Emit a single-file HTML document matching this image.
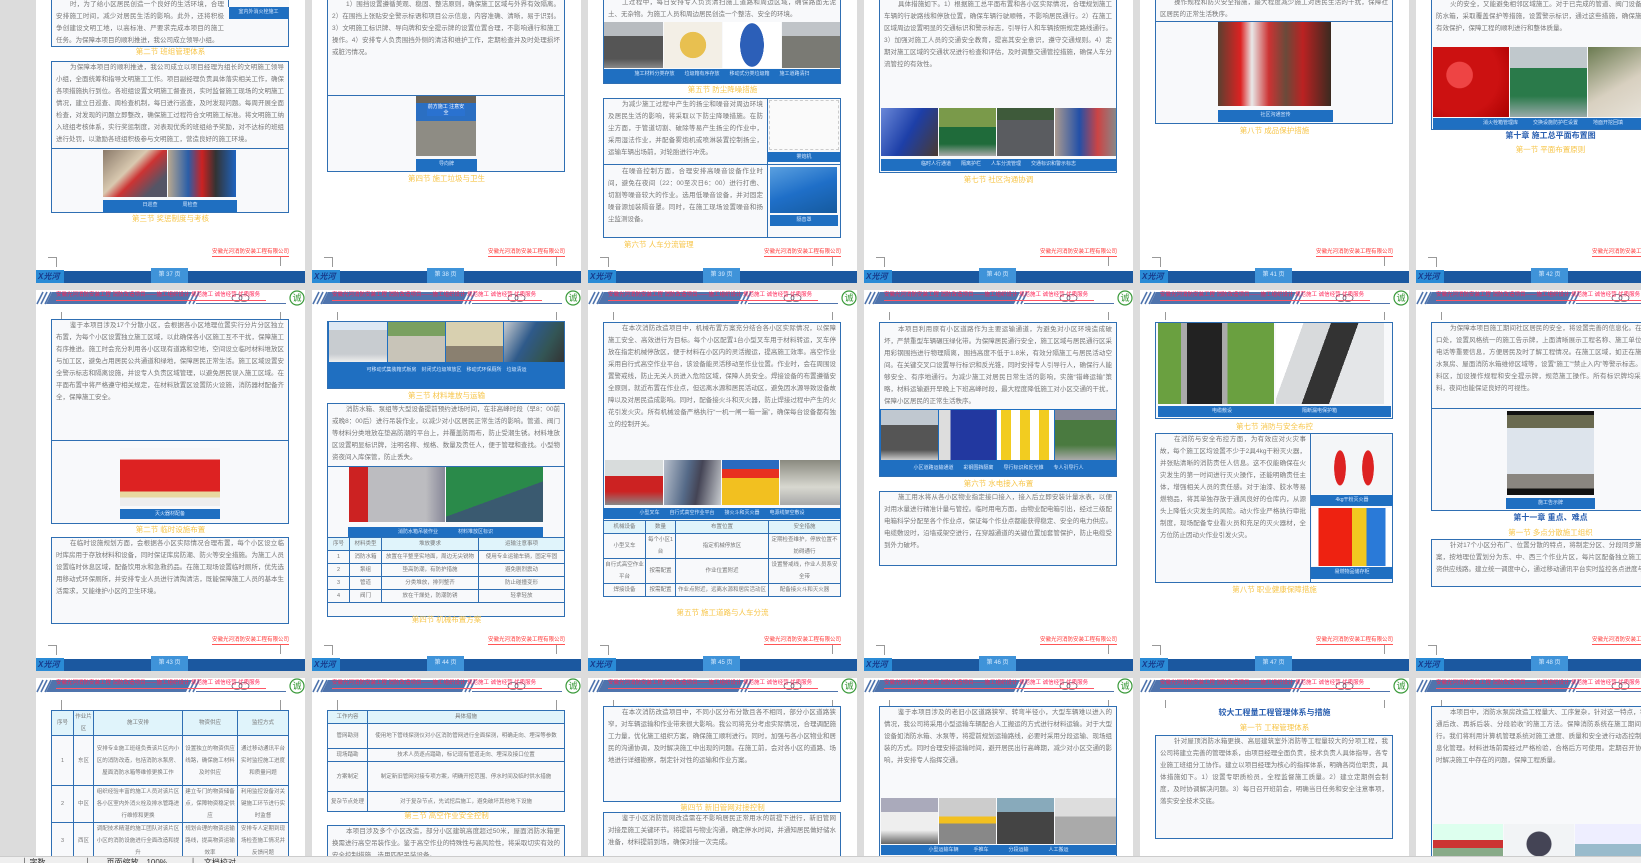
<!DOCTYPE html>
<html style="width:1641px;height:863px;overflow:hidden"><head><meta charset="utf-8">
<style>
*{margin:0;padding:0;box-sizing:border-box}
html,body{overflow:hidden}
body{width:1641px;height:863px;overflow:hidden;background:#dcdcdc;position:relative;font-family:"Liberation Sans","Noto Sans CJK SC",sans-serif}
.pg{position:absolute;width:269px;height:381px;background:#fff;overflow:hidden}
.hd{position:absolute;left:0;top:0}
.hdt{position:absolute;left:20px;top:1px;font-size:5.5px;color:#f25;white-space:nowrap;border-bottom:1px solid #f56;width:210px;overflow:hidden;line-height:9px}
.cm{position:absolute;border-color:#999;border-style:solid;border-width:0}
.ft{position:absolute;right:16px;top:346px;font-size:5.5px;color:#f33;border-bottom:1px solid #f55;white-space:nowrap;line-height:8px}
.bar{position:absolute;left:0;top:369px;width:269px;height:12px;background:#1b58a0}
.tab{position:absolute;left:115px;top:366px;width:37px;height:15px;background:#3f93d9;color:#d8ecff;font-size:6px;text-align:center;line-height:15px}
.logo{position:absolute;left:0;top:368px;width:28px;height:13px;background:#2a8bd6;color:#173a8a;font-size:8px;line-height:13px;font-style:italic;font-weight:bold;padding-left:2px;white-space:nowrap;overflow:hidden}
.bx{position:absolute;left:15px;width:238px;border:1px solid #2f6fb3;background:#f8f9fb;overflow:hidden}
.tx{position:absolute;font-size:6.5px;line-height:12px;color:#777;overflow:hidden;text-indent:14px;text-align:justify;padding:1px 4px}
.im{position:absolute}
.cap{position:absolute;background:#1f6fc1;color:#d6e8ff;font-size:5px;text-align:center;line-height:10px;white-space:nowrap;overflow:hidden}
.yl{position:absolute;left:0;width:269px;text-align:center;color:#f7c548;font-size:7.5px;line-height:10px;white-space:nowrap}
.h1{position:absolute;left:0;width:269px;text-align:center;color:#2a5fb0;font-size:8px;font-weight:bold;line-height:10px}
table{position:absolute;left:15px;width:238px;border-collapse:collapse;font-size:5.5px;color:#777;background:#f8f9fb}
td{border:1px solid #2f6fb3;text-align:center;line-height:12px;padding:0 1px}
tr.th td{background:#e0f4fb}
.sb{position:absolute;left:0;top:856px;width:1641px;height:7px;background:#efefef;border-top:1px solid #ccc;font-size:8px;line-height:12px;color:#333;white-space:nowrap;overflow:hidden}
</style></head><body>

<!-- ROW 1 (top -98) -->
<div class="pg" style="left:36px;top:-98px">
 <div class="bx" style="top:40px;height:105px"></div>
 <div class="tx" style="left:16px;top:96px;width:176px;height:48px">时，为了给小区居民创造一个良好的生活环境，合理安排施工时间，减少对居民生活的影响。此外，还将积极争创建设文明工地，以高标准、严要求完成本项目的施工任务。为保障本项目的顺利推进，我公司成立领导小组。</div>
 <div class="im" style="left:192px;top:40px;width:61px;height:65px;background:#f8f9fb;border-left:1px solid #2f6fb3"></div>
 <div class="cap" style="left:193px;top:105px;width:59px;height:12px">室内外消火栓施工</div>
 <div class="yl" style="top:145px">第二节 班组管理体系</div>
 <div class="bx" style="top:159px;height:152px"></div>
 <div class="tx" style="left:16px;top:159px;width:236px;height:87px">为保障本项目的顺利推进，我公司成立以项目经理为组长的文明施工领导小组，全面统筹和指导文明施工工作。项目副经理负责具体落实相关工作，确保各项措施执行到位。各班组设置文明施工督查员，实时监督施工现场的文明施工情况，建立日巡查、周检查机制，每日进行巡查，及时发现问题。每周开展全面检查，对发现的问题立即整改，确保施工过程符合文明施工标准。将文明施工纳入班组考核体系，实行奖惩制度，对表现优秀的班组给予奖励，对不达标的班组进行处罚，以激励各班组积极参与文明施工，营造良好的施工环境。</div>
 <div style="position:absolute;left:16px;top:246px;width:236px;border-top:1px solid #2f6fb3"></div>
 <div class="im" style="left:67px;top:248px;width:64px;height:47px;background:linear-gradient(135deg,#8a7a6a,#d9c9b0 40%,#c33 55%,#556 80%)"></div>
 <div class="im" style="left:132px;top:248px;width:68px;height:47px;background:linear-gradient(90deg,#b8a890,#2a5ea8 30%,#c22 50%,#333 70%,#1f64c0)"></div>
 <div class="cap" style="left:67px;top:298px;width:134px;height:12px">日巡查　　　　　周检查</div>
 <div class="yl" style="top:312px">第三节 奖惩制度与考核</div>
 <div class="ft">安徽光河消防安装工程有限公司</div>
 <div class="cm" style="left:12px;top:355px;width:9px;height:10px;border-top-width:1px;border-right-width:1px"></div>
 <div class="cm" style="left:244px;top:355px;height:9px;border-left-width:1px"></div>
 <div class="bar"></div><div class="tab">第 37 页</div><div class="logo">X光河</div>
</div>

<div class="pg" style="left:312px;top:-98px">
 <div class="bx" style="top:40px;height:230px"></div>
 <div class="tx" style="left:16px;top:96px;width:236px;height:96px">1）围挡设置遵循美观、稳固、整洁原则，确保施工区域与外界有效隔离。2）在围挡上张贴安全警示标语和项目公示信息，内容准确、清晰，易于识别。3）文明施工标识牌、导向牌和安全提示牌的设置位置合理，不影响通行和施工操作。4）安排专人负责围挡外侧的清洁和维护工作，定期检查并及时处理损坏或脏污情况。</div>
 <div style="position:absolute;left:16px;top:193px;width:236px;border-top:1px solid #2f6fb3"></div>
 <div class="im" style="left:104px;top:194px;width:60px;height:60px;background:linear-gradient(180deg,#6a6256 0 12%,#2b6fc2 12% 42%,#8e8c84 42% 100%)"></div>
 <div class="im" style="left:115px;top:202px;width:38px;height:12px;background:#2a72d0;color:#fff;font-size:5px;text-align:center;line-height:6px">前方施工 注意安全</div>
 <div class="cap" style="left:104px;top:257px;width:61px;height:12px">导向牌</div>
 <div class="yl" style="top:272px">第四节 施工垃圾与卫生</div>
 <div class="ft">安徽光河消防安装工程有限公司</div>
 <div class="cm" style="left:12px;top:355px;width:9px;height:10px;border-top-width:1px;border-right-width:1px"></div>
 <div class="cm" style="left:244px;top:355px;height:9px;border-left-width:1px"></div>
 <div class="bar"></div><div class="tab">第 38 页</div><div class="logo">X光河</div>
</div>

<div class="pg" style="left:588px;top:-98px">
 <div class="bx" style="top:40px;height:142px"></div>
 <div class="tx" style="left:16px;top:94px;width:236px;height:26px">工过程中，每日安排专人负责清扫施工道路和周边区域，确保路面无泥土、无杂物。为施工人员和周边居民创造一个整洁、安全的环境。</div>
 <div class="im" style="left:16px;top:120px;width:59px;height:46px;background:linear-gradient(180deg,#b8bcc0 0 30%,#555 30% 80%,#888)"></div>
 <div class="im" style="left:76px;top:120px;width:58px;height:46px;background:radial-gradient(circle at 50% 50%,#e8c050 0 35%,#f3efe6 36%)"></div>
 <div class="im" style="left:135px;top:120px;width:58px;height:46px;background:radial-gradient(ellipse 12px 22px at 50% 50%,#2c5fb8 0 98%,#fff 100%)"></div>
 <div class="im" style="left:194px;top:120px;width:58px;height:46px;background:linear-gradient(180deg,#c0c4c8 0 30%,#7a7a74 30%)"></div>
 <div class="cap" style="left:16px;top:167px;width:236px;height:14px">施工材料分类存放　　垃圾箱有序存放　　移动式分类垃圾箱　　施工道路清扫</div>
 <div class="yl" style="top:183px">第五节 防尘降噪措施</div>
 <div class="bx" style="top:196px;height:140px"></div>
 <div class="tx" style="left:16px;top:196px;width:163px;height:66px">为减少施工过程中产生的扬尘和噪音对周边环境及居民生活的影响，将采取以下防尘降噪措施。在防尘方面，于管道切割、破除等易产生扬尘的作业中，采用湿法作业，并配备雾炮机或喷淋装置控制扬尘，运输车辆出场前，对轮胎进行冲洗。</div>
 <div class="tx" style="left:16px;top:263px;width:163px;height:72px">在噪音控制方面，合理安排高噪音设备作业时间，避免在夜间（22：00至次日6：00）进行打凿、切割等噪音较大的作业。选用低噪音设备，并对固定噪音源加装隔音罩。同时，在施工现场设置噪音和扬尘监测设备。</div>
 <div style="position:absolute;left:16px;top:262px;width:236px;border-top:1px solid #2f6fb3"></div>
 <div style="position:absolute;left:179px;top:196px;height:140px;border-left:1px solid #2f6fb3"></div>
 <div class="im" style="left:181px;top:198px;width:70px;height:50px;background:#fafafa;border:1px dashed #ccc"></div>
 <div class="cap" style="left:180px;top:250px;width:72px;height:10px">雾炮机</div>
 <div class="im" style="left:182px;top:265px;width:67px;height:46px;background:linear-gradient(160deg,#5aa0e0,#1f6fc8 50%,#155a9e)"></div>
 <div class="cap" style="left:182px;top:313px;width:68px;height:11px">隔音罩</div>
 <div class="yl" style="top:338px;text-align:left;left:36px">第六节 人车分流管理</div>
 <div class="ft">安徽光河消防安装工程有限公司</div>
 <div class="cm" style="left:12px;top:355px;width:9px;height:10px;border-top-width:1px;border-right-width:1px"></div>
 <div class="cm" style="left:244px;top:355px;height:9px;border-left-width:1px"></div>
 <div class="bar"></div><div class="tab">第 39 页</div><div class="logo">X光河</div>
</div>

<div class="pg" style="left:864px;top:-98px">
 <div class="bx" style="top:40px;height:231px"></div>
 <div class="tx" style="left:16px;top:96px;width:236px;height:110px">具体措施如下。1）根据施工总平面布置和各小区实际情况，合理规划施工车辆的行驶路线和停放位置，确保车辆行驶顺畅，不影响居民通行。2）在施工区域周边设置明显的交通标识和警示标志，引导行人和车辆按照规定路线通行。3）加强对施工人员的交通安全教育，提高其安全意识，遵守交通规则。4）定期对施工区域的交通状况进行检查和评估，及时调整交通管控措施，确保人车分流管控的有效性。</div>
 <div class="im" style="left:17px;top:206px;width:57px;height:48px;background:linear-gradient(120deg,#6a88d8,#1d3fa8 50%,#4a3a30)"></div>
 <div class="im" style="left:75px;top:206px;width:57px;height:48px;background:linear-gradient(180deg,#7a9a4a 0 40%,#1f6b3a 40% 75%,#aaa)"></div>
 <div class="im" style="left:133px;top:206px;width:57px;height:48px;background:linear-gradient(180deg,#3e5a3a 0 25%,#5a5c60 25%)"></div>
 <div class="im" style="left:191px;top:206px;width:61px;height:48px;background:linear-gradient(90deg,#aa9a90,#2350a8 40%,#c44 70%,#888)"></div>
 <div class="cap" style="left:17px;top:257px;width:235px;height:12px">临时人行通道　　隔离护栏　　人车分流管理　　交通标识和警示标志</div>
 <div class="yl" style="top:273px">第七节 社区沟通协调</div>
 <div class="ft">安徽光河消防安装工程有限公司</div>
 <div class="cm" style="left:12px;top:355px;width:9px;height:10px;border-top-width:1px;border-right-width:1px"></div>
 <div class="cm" style="left:244px;top:355px;height:9px;border-left-width:1px"></div>
 <div class="bar"></div><div class="tab">第 40 页</div><div class="logo">X光河</div>
</div>

<div class="pg" style="left:1140px;top:-98px">
 <div class="bx" style="top:40px;height:182px"></div>
 <div class="tx" style="left:16px;top:94px;width:236px;height:26px">操作规程和防火安全措施，最大程度减少施工对居民生活的干扰，保障社区居民的正常生活秩序。</div>
 <div style="position:absolute;left:16px;top:119px;width:236px;border-top:1px solid #2f6fb3"></div>
 <div class="im" style="left:78px;top:120px;width:113px;height:84px;background:linear-gradient(90deg,#5a4030,#d22 20%,#e8e8e8 30%,#c33 45%,#6a4a3a 60%,#b22 75%,#3a2a20)"></div>
 <div class="cap" style="left:78px;top:208px;width:115px;height:12px">社区沟通宣传</div>
 <div class="yl" style="top:224px">第八节 成品保护措施</div>
 <div class="ft">安徽光河消防安装工程有限公司</div>
 <div class="cm" style="left:12px;top:355px;width:9px;height:10px;border-top-width:1px;border-right-width:1px"></div>
 <div class="cm" style="left:244px;top:355px;height:9px;border-left-width:1px"></div>
 <div class="bar"></div><div class="tab">第 41 页</div><div class="logo">X光河</div>
</div>

<div class="pg" style="left:1416px;top:-98px">
 <div class="bx" style="top:40px;height:188px;width:260px"></div>
 <div class="tx" style="left:16px;top:96px;width:240px;height:48px">火的安全，又能避免相邻区域施工。对于已完成的管道、阀门设备、屋顶消防水箱，采取覆盖保护等措施，设置警示标识，通过这些措施，确保施工过程中有效保护，保障工程的顺利进行和整体质量。</div>
 <div class="im" style="left:17px;top:145px;width:76px;height:70px;background:radial-gradient(circle at 35% 40%,#e44 0 20%,#c11 21% 60%,#a00)"></div>
 <div class="im" style="left:94px;top:145px;width:77px;height:70px;background:linear-gradient(180deg,#c0c8cc 0 30%,#2a7a4a 30% 70%,#9aa)"></div>
 <div class="im" style="left:172px;top:145px;width:80px;height:70px;background:linear-gradient(150deg,#6a7a50,#d8d0c0 50%,#ece8e0)"></div>
 <div class="cap" style="left:17px;top:216px;width:240px;height:11px">消火栓箱管理库　　　交换设施防护栏设置　　　地面开挖回填</div>
 <div class="h1" style="top:229px">第十章 施工总平面布置图</div>
 <div class="yl" style="top:243px">第一节 平面布置原则</div>
 <div class="ft">安徽光河消防安装工程有限公司</div>
 <div class="cm" style="left:12px;top:355px;width:9px;height:10px;border-top-width:1px;border-right-width:1px"></div>
 <div class="bar"></div><div class="tab">第 42 页</div><div class="logo">X光河</div>
</div>

<!-- ROW 2 (top 290) -->
<div class="pg" style="left:36px;top:290px">
 <svg class="hd" width="269" height="16"><g stroke="#4f74ad" stroke-width="1.6"><line x1="1" y1="14" x2="7" y2="2"/><line x1="5" y1="14" x2="11" y2="2"/><line x1="9" y1="14" x2="15" y2="2"/><line x1="153" y1="14" x2="159" y2="2"/><line x1="157" y1="14" x2="163" y2="2"/></g><polygon points="16,2 156,2 150,14 10,14" fill="#4f74ad"/><line x1="160" y1="13.5" x2="250" y2="13.5" stroke="#4f74ad"/><ellipse cx="201" cy="8" rx="5" ry="3.5" fill="none" stroke="#667" stroke-width=".8"/><ellipse cx="208" cy="8" rx="5" ry="3.5" fill="none" stroke="#667" stroke-width=".8"/><circle cx="261" cy="8" r="7" fill="#fff" stroke="#3a9a3a" stroke-width="1.2"/><text x="261" y="11" font-size="9" fill="#3a9a3a" text-anchor="middle" font-family="Noto Sans CJK SC">诚</text></svg>
 <div class="hdt">安徽光河消防安装工程 消防改造项目——施工组织设计 规范施工 诚信经营 优质服务</div>
 <div class="cm" style="left:25px;top:22px;height:8px;border-left-width:1px"></div><div class="cm" style="left:244px;top:22px;height:8px;border-left-width:1px"></div>
 <div class="bx" style="top:29px;height:205px"></div>
 <div class="tx" style="left:16px;top:29px;width:236px;height:120px">鉴于本项目涉及17个分散小区，会根据各小区地理位置实行分片分区独立布置，为每个小区设置独立施工区域，以此确保各小区施工互不干扰，保障施工有序推进。施工时会充分利用各小区现有道路和空地，空间设立临时材料堆放区与加工区，避免占用居民公共通道和绿地，保障居民正常生活。施工区域设置安全警示标志和隔离设施，并设专人负责区域管理，以避免居民误入施工区域。在平面布置中将严格遵守相关规定，在材料放置区设置防火设施，消防器材配备齐全，保障施工安全。</div>
 <div style="position:absolute;left:16px;top:150px;width:236px;border-top:1px solid #2f6fb3"></div>
 <div class="im" style="left:84px;top:158px;width:100px;height:58px;background:linear-gradient(180deg,#f6f6f8 0 20%,#d22 20% 75%,#e8d8a0 75% 85%,#eee 85%)"></div>
 <div class="cap" style="left:84px;top:219px;width:100px;height:10px">灭火器材配备</div>
 <div class="yl" style="top:235px">第二节 临时设施布置</div>
 <div class="bx" style="top:247px;height:87px"></div>
 <div class="tx" style="left:16px;top:247px;width:236px;height:86px">在临时设施规划方面，会根据各小区实际情况合理布置，每个小区设立临时库房用于存放材料和设备，同时保证库房防潮、防火等安全措施。为施工人员设置临时休息区域，配备饮用水和急救药品。在施工现场设置临时厕所，优先选用移动式环保厕所，并安排专业人员进行清掏清洁，既能保障施工人员的基本生活需求，又能维护小区的卫生环境。</div>
 <div class="ft">安徽光河消防安装工程有限公司</div>
 <div class="cm" style="left:12px;top:355px;width:9px;height:10px;border-top-width:1px;border-right-width:1px"></div>
 <div class="cm" style="left:244px;top:355px;height:9px;border-left-width:1px"></div>
 <div class="bar"></div><div class="tab">第 43 页</div><div class="logo">X光河</div>
</div>

<div class="pg" style="left:312px;top:290px">
 <svg class="hd" width="269" height="16"><g stroke="#4f74ad" stroke-width="1.6"><line x1="1" y1="14" x2="7" y2="2"/><line x1="5" y1="14" x2="11" y2="2"/><line x1="9" y1="14" x2="15" y2="2"/><line x1="153" y1="14" x2="159" y2="2"/><line x1="157" y1="14" x2="163" y2="2"/></g><polygon points="16,2 156,2 150,14 10,14" fill="#4f74ad"/><line x1="160" y1="13.5" x2="250" y2="13.5" stroke="#4f74ad"/><ellipse cx="201" cy="8" rx="5" ry="3.5" fill="none" stroke="#667" stroke-width=".8"/><ellipse cx="208" cy="8" rx="5" ry="3.5" fill="none" stroke="#667" stroke-width=".8"/><circle cx="261" cy="8" r="7" fill="#fff" stroke="#3a9a3a" stroke-width="1.2"/><text x="261" y="11" font-size="9" fill="#3a9a3a" text-anchor="middle" font-family="Noto Sans CJK SC">诚</text></svg>
 <div class="hdt">安徽光河消防安装工程 消防改造项目——施工组织设计 规范施工 诚信经营 优质服务</div>
 <div class="cm" style="left:25px;top:22px;height:8px;border-left-width:1px"></div><div class="cm" style="left:244px;top:22px;height:8px;border-left-width:1px"></div>
 <div class="bx" style="top:31px;height:68px;background:#1f6fc1"></div>
 <div class="im" style="left:17px;top:32px;width:58px;height:40px;background:linear-gradient(180deg,#dde8f4 0 20%,#c8ccd0 20% 80%,#eee)"></div>
 <div class="im" style="left:76px;top:32px;width:57px;height:40px;background:linear-gradient(180deg,#7aa060 0 35%,#c8c4b8 35%)"></div>
 <div class="im" style="left:134px;top:32px;width:57px;height:40px;background:linear-gradient(180deg,#d8d0b0 0 60%,#8a8070 60%)"></div>
 <div class="im" style="left:192px;top:32px;width:60px;height:40px;background:linear-gradient(120deg,#c8ccd0,#2f5a8a 40%,#355 70%,#333)"></div>
 <div class="cap" style="left:17px;top:75px;width:235px;height:22px;line-height:11px">可移动式集装箱式板房　封闭式垃圾堆放区　移动式环保厕所　垃圾清运</div>
 <div class="yl" style="top:101px">第三节 材料堆放与运输</div>
 <div class="bx" style="top:113px;height:214px"></div>
 <div class="tx" style="left:16px;top:113px;width:236px;height:62px">消防水箱、泵组等大型设备提前预约进场时间，在非高峰时段（早8：00前或晚8：00后）进行吊装作业，以减少对小区居民正常生活的影响。管道、阀门等材料分类堆放在垫高防潮的平台上，并覆盖防雨布，防止受潮生锈。材料堆放区设置明显标识牌，注明名称、规格、数量及责任人，便于管理和查找。小型物资夜间入库保管，防止丢失。</div>
 <div style="position:absolute;left:16px;top:176px;width:236px;border-top:1px solid #2f6fb3"></div>
 <div class="im" style="left:37px;top:177px;width:96px;height:55px;background:linear-gradient(90deg,#c22 0 20%,#bcbcc0 20% 80%,#889)"></div>
 <div class="im" style="left:134px;top:177px;width:97px;height:55px;background:linear-gradient(160deg,#2a8a4a 0 55%,#3a5a70 55%)"></div>
 <div class="cap" style="left:36px;top:237px;width:195px;height:10px">消防水箱吊装作业　　　　材料堆放区标识</div>
 <table style="top:247px"><tr class="th"><td style="width:22px">序号</td><td style="width:32px">材料类型</td><td>堆放要求</td><td style="width:86px">运输注意事项</td></tr>
 <tr><td>1</td><td>消防水箱</td><td>放置在平整坚实地面，周边无尖锐物</td><td>使用专业运输车辆，固定牢固</td></tr>
 <tr><td>2</td><td>泵组</td><td>垫高防潮，有防护措施</td><td>避免剧烈震动</td></tr>
 <tr><td>3</td><td>管道</td><td>分类堆放，排列整齐</td><td>防止碰撞变形</td></tr>
 <tr><td>4</td><td>阀门</td><td>放在干燥处，防潮防锈</td><td>轻拿轻放</td></tr></table>
 <div class="yl" style="top:325px">第四节 机械布置方案</div>
 <div class="ft">安徽光河消防安装工程有限公司</div>
 <div class="cm" style="left:12px;top:355px;width:9px;height:10px;border-top-width:1px;border-right-width:1px"></div>
 <div class="cm" style="left:244px;top:355px;height:9px;border-left-width:1px"></div>
 <div class="bar"></div><div class="tab">第 44 页</div><div class="logo">X光河</div>
</div>

<div class="pg" style="left:588px;top:290px">
 <svg class="hd" width="269" height="16"><g stroke="#4f74ad" stroke-width="1.6"><line x1="1" y1="14" x2="7" y2="2"/><line x1="5" y1="14" x2="11" y2="2"/><line x1="9" y1="14" x2="15" y2="2"/><line x1="153" y1="14" x2="159" y2="2"/><line x1="157" y1="14" x2="163" y2="2"/></g><polygon points="16,2 156,2 150,14 10,14" fill="#4f74ad"/><line x1="160" y1="13.5" x2="250" y2="13.5" stroke="#4f74ad"/><ellipse cx="201" cy="8" rx="5" ry="3.5" fill="none" stroke="#667" stroke-width=".8"/><ellipse cx="208" cy="8" rx="5" ry="3.5" fill="none" stroke="#667" stroke-width=".8"/><circle cx="261" cy="8" r="7" fill="#fff" stroke="#3a9a3a" stroke-width="1.2"/><text x="261" y="11" font-size="9" fill="#3a9a3a" text-anchor="middle" font-family="Noto Sans CJK SC">诚</text></svg>
 <div class="hdt">安徽光河消防安装工程 消防改造项目——施工组织设计 规范施工 诚信经营 优质服务</div>
 <div class="cm" style="left:25px;top:22px;height:8px;border-left-width:1px"></div><div class="cm" style="left:244px;top:22px;height:8px;border-left-width:1px"></div>
 <div class="bx" style="top:32px;height:200px"></div>
 <div class="tx" style="left:16px;top:32px;width:236px;height:136px">在本次消防改造项目中，机械布置方案充分结合各小区实际情况，以保障施工安全、高效进行为目标。每个小区配置1台小型叉车用于材料转运，叉车停放在指定机械停放区，便于材料在小区内的灵活搬运，提高施工效率。高空作业采用自行式高空作业平台，该设备能灵活移动至作业位置。作业时，会在周围设置警戒线，防止无关人员进入危险区域，保障人员安全。焊接设备的布置遵循安全原则，就近布置在作业点，但远离水源和居民活动区，避免因水源导致设备故障以及对居民造成影响。同时，配备接火斗和灭火器，防止焊接过程中产生的火花引发火灾。所有机械设备严格执行“一机一闸一箱一漏”，确保每台设备都有独立的控制开关。</div>
 <div class="im" style="left:17px;top:170px;width:58px;height:45px;background:linear-gradient(180deg,#d8dcdc 0 35%,#c22 35% 70%,#888)"></div>
 <div class="im" style="left:76px;top:170px;width:57px;height:45px;background:linear-gradient(100deg,#b8c0cc,#556a88 40%,#445 60%,#c8ccd0)"></div>
 <div class="im" style="left:134px;top:170px;width:57px;height:45px;background:linear-gradient(180deg,#2a6ac0 0 20%,#e83020 20% 40%,#f2c020 40%)"></div>
 <div class="im" style="left:192px;top:170px;width:60px;height:45px;background:linear-gradient(180deg,#8a8a80,#d8d8d0 60%,#aaa)"></div>
 <div class="cap" style="left:15px;top:218px;width:238px;height:11px">小型叉车　　自行式高空作业平台　　接火斗和灭火器　　电源线架空敷设</div>
 <table style="top:230px"><tr class="th"><td style="width:42px">机械设备</td><td style="width:30px">数量</td><td>布置位置</td><td style="width:72px">安全措施</td></tr>
 <tr><td>小型叉车</td><td>每个小区1台</td><td>指定机械停放区</td><td>定期检查维护，停放位置不妨碍通行</td></tr>
 <tr><td>自行式高空作业平台</td><td>按需配置</td><td>作业位置附近</td><td>设置警戒线，作业人员系安全带</td></tr>
 <tr><td>焊接设备</td><td>按需配置</td><td>作业点附近，远离水源和居民活动区</td><td>配备接火斗和灭火器</td></tr></table>
 <div class="yl" style="top:318px">第五节 施工道路与人车分流</div>
 <div class="ft">安徽光河消防安装工程有限公司</div>
 <div class="cm" style="left:12px;top:355px;width:9px;height:10px;border-top-width:1px;border-right-width:1px"></div>
 <div class="cm" style="left:244px;top:355px;height:9px;border-left-width:1px"></div>
 <div class="bar"></div><div class="tab">第 45 页</div><div class="logo">X光河</div>
</div>

<div class="pg" style="left:864px;top:290px">
 <svg class="hd" width="269" height="16"><g stroke="#4f74ad" stroke-width="1.6"><line x1="1" y1="14" x2="7" y2="2"/><line x1="5" y1="14" x2="11" y2="2"/><line x1="9" y1="14" x2="15" y2="2"/><line x1="153" y1="14" x2="159" y2="2"/><line x1="157" y1="14" x2="163" y2="2"/></g><polygon points="16,2 156,2 150,14 10,14" fill="#4f74ad"/><line x1="160" y1="13.5" x2="250" y2="13.5" stroke="#4f74ad"/><ellipse cx="201" cy="8" rx="5" ry="3.5" fill="none" stroke="#667" stroke-width=".8"/><ellipse cx="208" cy="8" rx="5" ry="3.5" fill="none" stroke="#667" stroke-width=".8"/><circle cx="261" cy="8" r="7" fill="#fff" stroke="#3a9a3a" stroke-width="1.2"/><text x="261" y="11" font-size="9" fill="#3a9a3a" text-anchor="middle" font-family="Noto Sans CJK SC">诚</text></svg>
 <div class="hdt">安徽光河消防安装工程 消防改造项目——施工组织设计 规范施工 诚信经营 优质服务</div>
 <div class="cm" style="left:25px;top:22px;height:8px;border-left-width:1px"></div><div class="cm" style="left:244px;top:22px;height:8px;border-left-width:1px"></div>
 <div class="bx" style="top:32px;height:155px;background:#1f6fc1"></div>
 <div class="tx" style="left:16px;top:33px;width:236px;height:86px;background:#f8f9fb">本项目利用原有小区道路作为主要运输通道，为避免对小区环境造成破坏，严禁重型车辆碾压绿化带。为保障居民通行安全，施工区域与居民通行区采用彩钢围挡进行物理隔离，围挡高度不低于1.8米，有效分隔施工与居民活动空间。在关键交叉口设置导行标识和反光锥，同时安排专人引导行人，确保行人能够安全、有序地通行。为减少施工对居民日常生活的影响，实施“错峰运输”策略，材料运输避开早晚上下班高峰时段，最大程度降低施工对小区交通的干扰，保障小区居民的正常生活秩序。</div>
 <div class="im" style="left:17px;top:120px;width:57px;height:50px;background:linear-gradient(180deg,#c0c8d0 0 30%,#555 30% 80%,#ccc)"></div>
 <div class="im" style="left:75px;top:120px;width:57px;height:50px;background:linear-gradient(90deg,#ddd 0 20%,#2238a0 20%)"></div>
 <div class="im" style="left:133px;top:120px;width:57px;height:50px;background:repeating-linear-gradient(90deg,#fff 0 4px,#f2cc20 4px 14px,#fff 14px 19px)"></div>
 <div class="im" style="left:191px;top:120px;width:61px;height:50px;background:linear-gradient(180deg,#889 0 20%,#4a7a40 20% 70%,#aaa)"></div>
 <div class="cap" style="left:17px;top:173px;width:235px;height:11px">小区道路运输通道　　彩钢围挡隔离　　导行标识和反光锥　　专人引导行人</div>
 <div class="yl" style="top:189px">第六节 水电接入布置</div>
 <div class="bx" style="top:201px;height:75px"></div>
 <div class="tx" style="left:16px;top:201px;width:236px;height:74px">施工用水将从各小区物业指定接口接入，接入后立即安装计量水表，以便对用水量进行精准计量与管控。临时用电方面，由物业配电箱引出，经过三级配电箱科学分配至各个作业点，保证每个作业点都能获得稳定、安全的电力供应。电缆敷设时，沿墙或架空进行，在穿越通道的关键位置加套管保护，防止电缆受到外力破坏。</div>
 <div class="ft">安徽光河消防安装工程有限公司</div>
 <div class="cm" style="left:12px;top:355px;width:9px;height:10px;border-top-width:1px;border-right-width:1px"></div>
 <div class="cm" style="left:244px;top:355px;height:9px;border-left-width:1px"></div>
 <div class="bar"></div><div class="tab">第 46 页</div><div class="logo">X光河</div>
</div>

<div class="pg" style="left:1140px;top:290px">
 <svg class="hd" width="269" height="16"><g stroke="#4f74ad" stroke-width="1.6"><line x1="1" y1="14" x2="7" y2="2"/><line x1="5" y1="14" x2="11" y2="2"/><line x1="9" y1="14" x2="15" y2="2"/><line x1="153" y1="14" x2="159" y2="2"/><line x1="157" y1="14" x2="163" y2="2"/></g><polygon points="16,2 156,2 150,14 10,14" fill="#4f74ad"/><line x1="160" y1="13.5" x2="250" y2="13.5" stroke="#4f74ad"/><ellipse cx="201" cy="8" rx="5" ry="3.5" fill="none" stroke="#667" stroke-width=".8"/><ellipse cx="208" cy="8" rx="5" ry="3.5" fill="none" stroke="#667" stroke-width=".8"/><circle cx="261" cy="8" r="7" fill="#fff" stroke="#3a9a3a" stroke-width="1.2"/><text x="261" y="11" font-size="9" fill="#3a9a3a" text-anchor="middle" font-family="Noto Sans CJK SC">诚</text></svg>
 <div class="hdt">安徽光河消防安装工程 消防改造项目——施工组织设计 规范施工 诚信经营 优质服务</div>
 <div class="cm" style="left:25px;top:22px;height:8px;border-left-width:1px"></div><div class="cm" style="left:244px;top:22px;height:8px;border-left-width:1px"></div>
 <div class="bx" style="top:32px;height:97px"></div>
 <div class="im" style="left:18px;top:33px;width:116px;height:81px;background:linear-gradient(90deg,#6aa040 0 20%,#aaa 20% 25%,#222 25% 55%,#aaa 55% 60%,#6aa040 60%)"></div>
 <div class="im" style="left:136px;top:33px;width:108px;height:81px;background:linear-gradient(110deg,#fff 0 20%,#d8dadc 20% 40%,#333 40% 60%,#e4e6e8 60%)"></div>
 <div class="cap" style="left:18px;top:116px;width:233px;height:11px">电缆敷设　　　　　　　　　　　　　　隔断漏电保护箱</div>
 <div class="yl" style="top:132px">第七节 消防与安全布控</div>
 <div class="bx" style="top:143px;height:150px"></div>
 <div class="tx" style="left:16px;top:143px;width:154px;height:148px">在消防与安全布控方面，为有效应对火灾事故，每个施工区均设置不少于2具4kg干粉灭火器，并张贴清晰的消防责任人信息。这不仅能确保在火灾发生的第一时间进行灭火操作，还能明确责任主体，增强相关人员的责任感。对于油漆、胶水等易燃物品，将其单独存放于通风良好的仓库内，从源头上降低火灾发生的风险。动火作业严格执行审批制度，现场配备专业看火员和充足的灭火器材，全方位防止因动火作业引发火灾。</div>
 <div style="position:absolute;left:170px;top:143px;height:150px;border-left:1px solid #2f6fb3"></div>
 <div class="im" style="left:172px;top:146px;width:80px;height:58px;background:radial-gradient(ellipse 6px 18px at 35% 55%,#d22 0 95%,transparent 100%),radial-gradient(ellipse 6px 18px at 70% 55%,#d22 0 95%,transparent 100%),#f4f6f8"></div>
 <div class="cap" style="left:171px;top:205px;width:82px;height:11px">4kg干粉灭火器</div>
 <div class="im" style="left:172px;top:218px;width:80px;height:58px;background:linear-gradient(90deg,#fff 0 8%,#e21 8% 50%,#f2c820 50% 68%,#2a7ad8 68% 92%,#fff 92%)"></div>
 <div class="cap" style="left:171px;top:277px;width:82px;height:12px">易燃物品储存柜</div>
 <div class="yl" style="top:295px">第八节 职业健康保障措施</div>
 <div class="ft">安徽光河消防安装工程有限公司</div>
 <div class="cm" style="left:12px;top:355px;width:9px;height:10px;border-top-width:1px;border-right-width:1px"></div>
 <div class="cm" style="left:244px;top:355px;height:9px;border-left-width:1px"></div>
 <div class="bar"></div><div class="tab">第 47 页</div><div class="logo">X光河</div>
</div>

<div class="pg" style="left:1416px;top:290px">
 <svg class="hd" width="269" height="16"><g stroke="#4f74ad" stroke-width="1.6"><line x1="1" y1="14" x2="7" y2="2"/><line x1="5" y1="14" x2="11" y2="2"/><line x1="9" y1="14" x2="15" y2="2"/><line x1="153" y1="14" x2="159" y2="2"/><line x1="157" y1="14" x2="163" y2="2"/></g><polygon points="16,2 156,2 150,14 10,14" fill="#4f74ad"/><line x1="160" y1="13.5" x2="250" y2="13.5" stroke="#4f74ad"/><ellipse cx="201" cy="8" rx="5" ry="3.5" fill="none" stroke="#667" stroke-width=".8"/><ellipse cx="208" cy="8" rx="5" ry="3.5" fill="none" stroke="#667" stroke-width=".8"/></svg>
 <div class="hdt">安徽光河消防安装工程 消防改造项目——施工组织设计 规范施工 诚信经营 优质服务</div>
 <div class="cm" style="left:25px;top:22px;height:8px;border-left-width:1px"></div>
 <div class="bx" style="top:32px;height:189px;width:260px"></div>
 <div class="tx" style="left:16px;top:32px;width:240px;height:86px">为保障本项目施工期间社区居民的安全，将设置完善的信息化。在各小区入口处，设置风格统一的施工告示牌，上面清晰展示工程名称、施工单位以及监督电话等重要信息，方便居民及时了解工程情况。在施工区域，如正在施工的消防水泵房、屋面消防水箱维修区域等，设置“施工”“禁止入内”等警示标志。在主要材料区，加设操作规程和安全提示牌，规范施工操作。所有标识牌均采用反光材料，夜间也能保证良好的可视性。</div>
 <div style="position:absolute;left:16px;top:118px;width:244px;border-top:1px solid #2f6fb3"></div>
 <div class="im" style="left:91px;top:121px;width:87px;height:84px;background:linear-gradient(180deg,#111 0 5%,#6a6a50 5% 20%,#dde4ec 20% 75%,#8a8680 75% 92%,#111 92%)"></div>
 <div class="cap" style="left:90px;top:208px;width:89px;height:11px">施工告示牌</div>
 <div class="h1" style="top:223px">第十一章 重点、难点</div>
 <div class="yl" style="top:238px">第一节 多点分散施工组织</div>
 <div class="bx" style="top:249px;height:48px;width:260px"></div>
 <div class="tx" style="left:16px;top:249px;width:240px;height:48px">针对17个小区分布广、位置分散的特点，将制定分区、分段同步施工技术方案，按地理位置划分为东、中、西三个作业片区，每片区配备独立施工班组和物资供应线路。建立统一调度中心，通过移动通讯平台实时监控各点进度与问题。</div>
 <div class="ft">安徽光河消防安装工程有限公司</div>
 <div class="cm" style="left:12px;top:355px;width:9px;height:10px;border-top-width:1px;border-right-width:1px"></div>
 <div class="bar"></div><div class="tab">第 48 页</div><div class="logo">X光河</div>
</div>

<!-- ROW 3 (top 678) -->
<div class="pg" style="left:36px;top:678px;height:178px">
 <svg class="hd" width="269" height="16"><g stroke="#4f74ad" stroke-width="1.6"><line x1="1" y1="14" x2="7" y2="2"/><line x1="5" y1="14" x2="11" y2="2"/><line x1="9" y1="14" x2="15" y2="2"/><line x1="153" y1="14" x2="159" y2="2"/><line x1="157" y1="14" x2="163" y2="2"/></g><polygon points="16,2 156,2 150,14 10,14" fill="#4f74ad"/><line x1="160" y1="13.5" x2="250" y2="13.5" stroke="#4f74ad"/><ellipse cx="201" cy="8" rx="5" ry="3.5" fill="none" stroke="#667" stroke-width=".8"/><ellipse cx="208" cy="8" rx="5" ry="3.5" fill="none" stroke="#667" stroke-width=".8"/><circle cx="261" cy="8" r="7" fill="#fff" stroke="#3a9a3a" stroke-width="1.2"/><text x="261" y="11" font-size="9" fill="#3a9a3a" text-anchor="middle" font-family="Noto Sans CJK SC">诚</text></svg>
 <div class="hdt">安徽光河消防安装工程 消防改造项目——施工组织设计 规范施工 诚信经营 优质服务</div>
 <div class="cm" style="left:25px;top:22px;height:10px;border-left-width:1px"></div><div class="cm" style="left:244px;top:22px;height:10px;border-left-width:1px"></div>
 <table style="top:32px;line-height:12px"><tr class="th" style="height:25px"><td style="width:22px">序号</td><td style="width:20px">作业片区</td><td>施工安排</td><td style="width:55px">物资供应</td><td style="width:51px">监控方式</td></tr>
 <tr style="height:50px"><td>1</td><td>东区</td><td>安排专业施工班组负责该片区内小区的消防改造，包括消防水泵房、屋面消防水箱等维修更换工作</td><td>设置独立的物资供应线路，确保施工材料及时供应</td><td>通过移动通讯平台实时监控施工进度和质量问题</td></tr>
 <tr style="height:37px"><td>2</td><td>中区</td><td>组织经验丰富的施工人员对该片区各小区室内外消火栓及排水管路进行维修和更换</td><td>建立专门的物资储备点，保障物资稳定供应</td><td>利用监控设备对关键施工环节进行实时监督</td></tr>
 <tr style="height:37px"><td>3</td><td>西区</td><td>调配技术精湛的施工团队对该片区小区的消防设施进行全面改造和提升</td><td>规划合理的物资运输路线，提高物资运输效率</td><td>安排专人定期到现场检查施工情况并反馈问题</td></tr></table>
</div>

<div class="pg" style="left:312px;top:678px;height:178px">
 <svg class="hd" width="269" height="16"><g stroke="#4f74ad" stroke-width="1.6"><line x1="1" y1="14" x2="7" y2="2"/><line x1="5" y1="14" x2="11" y2="2"/><line x1="9" y1="14" x2="15" y2="2"/><line x1="153" y1="14" x2="159" y2="2"/><line x1="157" y1="14" x2="163" y2="2"/></g><polygon points="16,2 156,2 150,14 10,14" fill="#4f74ad"/><line x1="160" y1="13.5" x2="250" y2="13.5" stroke="#4f74ad"/><ellipse cx="201" cy="8" rx="5" ry="3.5" fill="none" stroke="#667" stroke-width=".8"/><ellipse cx="208" cy="8" rx="5" ry="3.5" fill="none" stroke="#667" stroke-width=".8"/><circle cx="261" cy="8" r="7" fill="#fff" stroke="#3a9a3a" stroke-width="1.2"/><text x="261" y="11" font-size="9" fill="#3a9a3a" text-anchor="middle" font-family="Noto Sans CJK SC">诚</text></svg>
 <div class="hdt">安徽光河消防安装工程 消防改造项目——施工组织设计 规范施工 诚信经营 优质服务</div>
 <div class="cm" style="left:25px;top:22px;height:10px;border-left-width:1px"></div><div class="cm" style="left:244px;top:22px;height:10px;border-left-width:1px"></div>
 <table style="top:32px"><tr class="th"><td style="width:40px">工作内容</td><td>具体措施</td></tr>
 <tr style="height:25px"><td>管网勘测</td><td>使用地下管线探测仪对小区消防管网进行全面探测，明确走向、埋深等参数</td></tr>
 <tr><td>现场踏勘</td><td>技术人员逐点踏勘，标记现有管道走向、埋深及接口位置</td></tr>
 <tr style="height:30px"><td>方案制定</td><td>制定新旧管网对接专项方案，明确开挖范围、停水时间及临时供水措施</td></tr>
 <tr style="height:20px"><td>复杂节点处理</td><td>对于复杂节点，先试挖后施工，避免破坏其他地下设施</td></tr></table>
 <div class="yl" style="top:133px">第三节 高空作业安全控制</div>
 <div class="bx" style="top:147px;height:60px"></div>
 <div class="tx" style="left:16px;top:147px;width:236px;height:40px">本项目涉及多个小区改造，部分小区建筑高度超过50米，屋面消防水箱更换需进行高空吊装作业。鉴于高空作业的特殊性与高风险性，将采取切实有效的安全控制措施，选用匹配吊装设备。</div>
</div>

<div class="pg" style="left:588px;top:678px;height:178px">
 <svg class="hd" width="269" height="16"><g stroke="#4f74ad" stroke-width="1.6"><line x1="1" y1="14" x2="7" y2="2"/><line x1="5" y1="14" x2="11" y2="2"/><line x1="9" y1="14" x2="15" y2="2"/><line x1="153" y1="14" x2="159" y2="2"/><line x1="157" y1="14" x2="163" y2="2"/></g><polygon points="16,2 156,2 150,14 10,14" fill="#4f74ad"/><line x1="160" y1="13.5" x2="250" y2="13.5" stroke="#4f74ad"/><ellipse cx="201" cy="8" rx="5" ry="3.5" fill="none" stroke="#667" stroke-width=".8"/><ellipse cx="208" cy="8" rx="5" ry="3.5" fill="none" stroke="#667" stroke-width=".8"/><circle cx="261" cy="8" r="7" fill="#fff" stroke="#3a9a3a" stroke-width="1.2"/><text x="261" y="11" font-size="9" fill="#3a9a3a" text-anchor="middle" font-family="Noto Sans CJK SC">诚</text></svg>
 <div class="hdt">安徽光河消防安装工程 消防改造项目——施工组织设计 规范施工 诚信经营 优质服务</div>
 <div class="cm" style="left:25px;top:22px;height:8px;border-left-width:1px"></div><div class="cm" style="left:244px;top:22px;height:8px;border-left-width:1px"></div>
 <div class="bx" style="top:28px;height:96px"></div>
 <div class="tx" style="left:16px;top:28px;width:236px;height:94px">在本次消防改造项目中，不同小区分布分散且各不相同，部分小区道路狭窄，对车辆运输和作业带来很大影响。我公司将充分考虑实际情况，合理调配施工力量，优化施工组织方案，确保施工顺利进行。同时，加强与各小区物业和居民的沟通协调，及时解决施工中出现的问题。在施工前，会对各小区的道路、场地进行详细勘察，制定针对性的运输和作业方案。</div>
 <div class="yl" style="top:125px">第四节 新旧管网对接控制</div>
 <div class="bx" style="top:134px;height:60px"></div>
 <div class="tx" style="left:16px;top:134px;width:236px;height:50px">鉴于小区消防管网改造需在不影响居民正常用水的前提下进行，新旧管网对接是施工关键环节。将提前与物业沟通，确定停水时间，并通知居民做好储水准备，材料提前到场，确保对接一次完成。</div>
</div>

<div class="pg" style="left:864px;top:678px;height:178px">
 <svg class="hd" width="269" height="16"><g stroke="#4f74ad" stroke-width="1.6"><line x1="1" y1="14" x2="7" y2="2"/><line x1="5" y1="14" x2="11" y2="2"/><line x1="9" y1="14" x2="15" y2="2"/><line x1="153" y1="14" x2="159" y2="2"/><line x1="157" y1="14" x2="163" y2="2"/></g><polygon points="16,2 156,2 150,14 10,14" fill="#4f74ad"/><line x1="160" y1="13.5" x2="250" y2="13.5" stroke="#4f74ad"/><ellipse cx="201" cy="8" rx="5" ry="3.5" fill="none" stroke="#667" stroke-width=".8"/><ellipse cx="208" cy="8" rx="5" ry="3.5" fill="none" stroke="#667" stroke-width=".8"/><circle cx="261" cy="8" r="7" fill="#fff" stroke="#3a9a3a" stroke-width="1.2"/><text x="261" y="11" font-size="9" fill="#3a9a3a" text-anchor="middle" font-family="Noto Sans CJK SC">诚</text></svg>
 <div class="hdt">安徽光河消防安装工程 消防改造项目——施工组织设计 规范施工 诚信经营 优质服务</div>
 <div class="cm" style="left:25px;top:22px;height:8px;border-left-width:1px"></div><div class="cm" style="left:244px;top:22px;height:8px;border-left-width:1px"></div>
 <div class="bx" style="top:28px;height:160px"></div>
 <div class="tx" style="left:16px;top:28px;width:236px;height:90px">鉴于本项目涉及的老旧小区道路狭窄、转弯半径小，大型车辆难以进入的情况，我公司将采用小型运输车辆配合人工搬运的方式进行材料运输。对于大型设备如消防水箱、水泵等，将提前规划运输路线，必要时采用分段运输、现场组装的方式。同时合理安排运输时间，避开居民出行高峰期，减少对小区交通的影响，并安排专人指挥交通。</div>
 <div class="im" style="left:17px;top:120px;width:57px;height:46px;background:linear-gradient(180deg,#aab 0 30%,#eee 30% 70%,#666)"></div>
 <div class="im" style="left:75px;top:120px;width:57px;height:46px;background:linear-gradient(180deg,#ccc 0 40%,#f2c020 40% 55%,#888 55%)"></div>
 <div class="im" style="left:133px;top:120px;width:57px;height:46px;background:linear-gradient(180deg,#8ab 0 30%,#444 30%)"></div>
 <div class="im" style="left:191px;top:120px;width:61px;height:46px;background:linear-gradient(180deg,#ddd 0 40%,#aaa 40%)"></div>
 <div class="cap" style="left:17px;top:167px;width:235px;height:10px">小型运输车辆　　　手推车　　　　分段运输　　　　人工搬运</div>
</div>

<div class="pg" style="left:1140px;top:678px;height:178px">
 <svg class="hd" width="269" height="16"><g stroke="#4f74ad" stroke-width="1.6"><line x1="1" y1="14" x2="7" y2="2"/><line x1="5" y1="14" x2="11" y2="2"/><line x1="9" y1="14" x2="15" y2="2"/><line x1="153" y1="14" x2="159" y2="2"/><line x1="157" y1="14" x2="163" y2="2"/></g><polygon points="16,2 156,2 150,14 10,14" fill="#4f74ad"/><line x1="160" y1="13.5" x2="250" y2="13.5" stroke="#4f74ad"/><ellipse cx="201" cy="8" rx="5" ry="3.5" fill="none" stroke="#667" stroke-width=".8"/><ellipse cx="208" cy="8" rx="5" ry="3.5" fill="none" stroke="#667" stroke-width=".8"/><circle cx="261" cy="8" r="7" fill="#fff" stroke="#3a9a3a" stroke-width="1.2"/><text x="261" y="11" font-size="9" fill="#3a9a3a" text-anchor="middle" font-family="Noto Sans CJK SC">诚</text></svg>
 <div class="hdt">安徽光河消防安装工程 消防改造项目——施工组织设计 规范施工 诚信经营 优质服务</div>
 <div class="cm" style="left:25px;top:22px;height:8px;border-left-width:1px"></div><div class="cm" style="left:244px;top:22px;height:8px;border-left-width:1px"></div>
 <div class="h1" style="top:30px">较大工程量工程管理体系与措施</div>
 <div class="yl" style="top:45px">第一节 工程管理体系</div>
 <div class="bx" style="top:57px;height:104px"></div>
 <div class="tx" style="left:16px;top:57px;width:236px;height:102px">针对屋顶消防水箱更换、高层建筑室外消防等工程量较大的分项工程，我公司将建立完善的管理体系，由项目经理全面负责，技术负责人具体指导，各专业施工班组分工协作。建立以项目经理为核心的指挥体系，明确各岗位职责，具体措施如下。1）设置专职质检员，全程监督施工质量。2）建立定期例会制度，及时协调解决问题。3）每日召开班前会，明确当日任务和安全注意事项，落实安全技术交底。</div>
</div>

<div class="pg" style="left:1416px;top:678px;height:178px">
 <svg class="hd" width="269" height="16"><g stroke="#4f74ad" stroke-width="1.6"><line x1="1" y1="14" x2="7" y2="2"/><line x1="5" y1="14" x2="11" y2="2"/><line x1="9" y1="14" x2="15" y2="2"/><line x1="153" y1="14" x2="159" y2="2"/><line x1="157" y1="14" x2="163" y2="2"/></g><polygon points="16,2 156,2 150,14 10,14" fill="#4f74ad"/><line x1="160" y1="13.5" x2="250" y2="13.5" stroke="#4f74ad"/><ellipse cx="201" cy="8" rx="5" ry="3.5" fill="none" stroke="#667" stroke-width=".8"/><ellipse cx="208" cy="8" rx="5" ry="3.5" fill="none" stroke="#667" stroke-width=".8"/></svg>
 <div class="hdt">安徽光河消防安装工程 消防改造项目——施工组织设计 规范施工 诚信经营 优质服务</div>
 <div class="cm" style="left:25px;top:22px;height:8px;border-left-width:1px"></div>
 <div class="bx" style="top:28px;height:170px;width:260px"></div>
 <div class="tx" style="left:16px;top:28px;width:240px;height:112px">本项目中，消防水泵房改造工程量大、工序复杂，针对这一特点，将采用“先通后改、再拆后装、分段验收”的施工方法。保障消防系统在施工期间的正常运行。我们将利用计算机管理系统对施工进度、质量和安全进行动态控制，实现信息化管理。材料进场前需经过严格检验，合格后方可使用。定期召开协调会，及时解决施工中存在的问题，保障工程质量。</div>
 <div class="im" style="left:17px;top:146px;width:70px;height:40px;background:linear-gradient(180deg,#dfe 0 40%,#c33 40% 60%,#8a8 60%)"></div>
 <div class="im" style="left:88px;top:146px;width:70px;height:40px;background:radial-gradient(circle,#445 0 30%,#f2f4f6 32%)"></div>
 <div class="im" style="left:159px;top:146px;width:70px;height:40px;background:linear-gradient(180deg,#eef 0 50%,#9bc 50%)"></div>
</div>

<div class="sb">&nbsp;&nbsp;&nbsp;&nbsp;&nbsp;&nbsp;&nbsp;&nbsp;&nbsp;&nbsp;│ 字数　　　　　│　　页面缩放　100%　　　│　文档校对</div>
</body></html>
